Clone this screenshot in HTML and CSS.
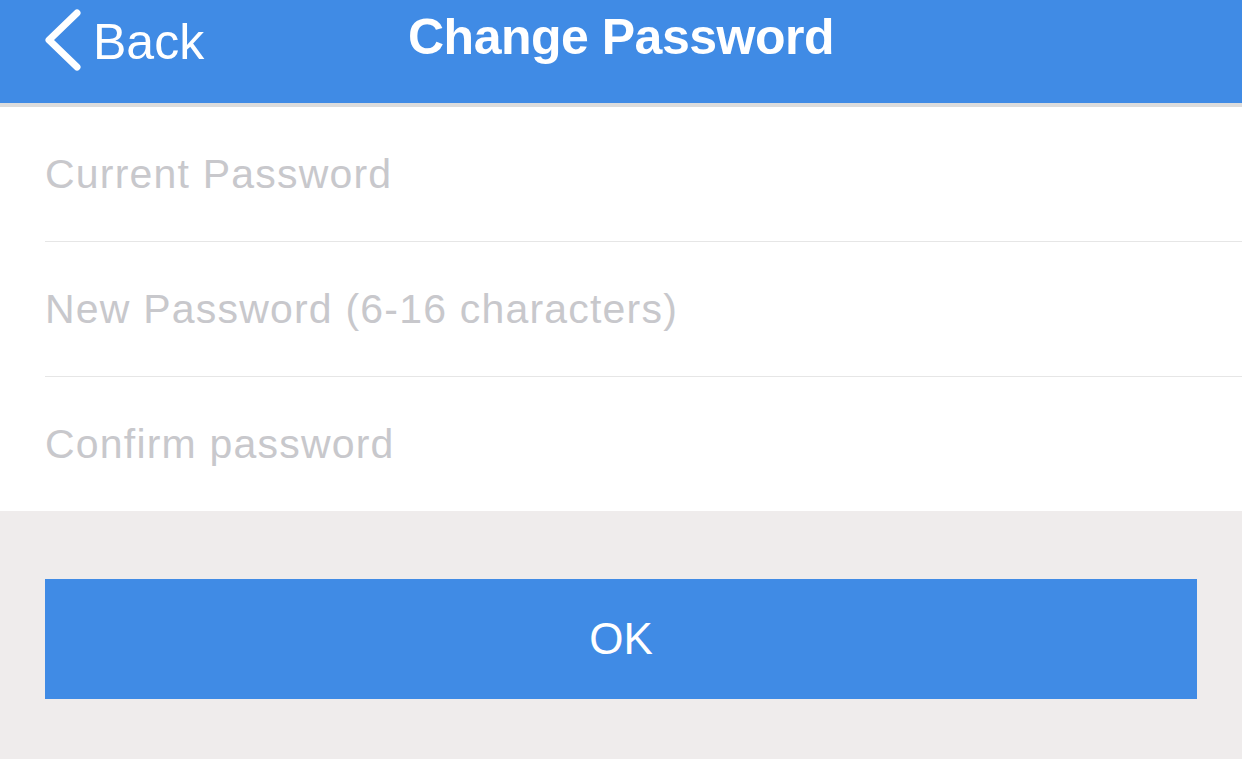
FILE: index.html
```html
<!DOCTYPE html>
<html lang="en">
<head>
  <meta charset="UTF-8">
  <meta name="viewport" content="width=device-width, initial-scale=1.0">
  <title>Change Password</title>
  <link rel="stylesheet" href="styles.css">
</head>
<body>
  <header class="topbar">
    <a href="#" class="back">
      <svg class="chevron" width="42" height="64" viewBox="0 0 42 64">
        <path d="M35 5 L7 32 L35 59" fill="none" stroke="#fff" stroke-width="7" stroke-linecap="round" stroke-linejoin="round"/>
      </svg>
      <span>Back</span>
    </a>
    <h1>Change Password</h1>
    <div></div>
  </header>

  <main>
    <form class="pw-form" onsubmit="return false">
      <div class="field"><input type="password" placeholder="Current Password"></div>
      <div class="field"><input type="password" placeholder="New Password (6-16 characters)"></div>
      <div class="field"><input type="password" placeholder="Confirm password"></div>
    </form>

    <div class="actions">
      <button type="button" class="ok">OK</button>
    </div>
  </main>
</body>
</html>
```

FILE: styles.css
```css
body { margin: 0; background: #efecec; font-family: "Liberation Sans", Arial, sans-serif; color: #333; }

.topbar { display: grid; grid-template-columns: 1fr auto 1fr; align-items: center; height: 103px; background: #408be5; border-bottom: 4px solid #dcdcdc; box-sizing: content-box; }
.back { display: flex; align-items: center; padding-left: 42px; color: #fff; text-decoration: none; font-size: 50px; height: 80px; margin-top: -20px; }
.chevron { margin-right: 9px; margin-top: -4px; }
.topbar h1 { margin: 0 0 30px; color: #fff; font-size: 50px; font-weight: 700; letter-spacing: -0.5px; }

.pw-form { background: #fff; padding-left: 45px; margin: 0; }
.field { height: 134px; display: flex; align-items: center; border-bottom: 1px solid #e6e6e6; }
.field:last-child { border-bottom: none; }
.field input { width: 100%; border: none; outline: none; background: transparent; padding: 0; margin-top: 0; font-family: inherit; font-size: 41px; letter-spacing: 1.2px; color: #333; }
.field input::placeholder { color: #c8c8cc; }

.actions { padding: 68px 45px 0; }
.ok { display: block; width: 100%; height: 120px; border: none; border-radius: 0; background: #408be5; color: #fff; font-family: inherit; font-size: 44px; cursor: pointer; }
```
